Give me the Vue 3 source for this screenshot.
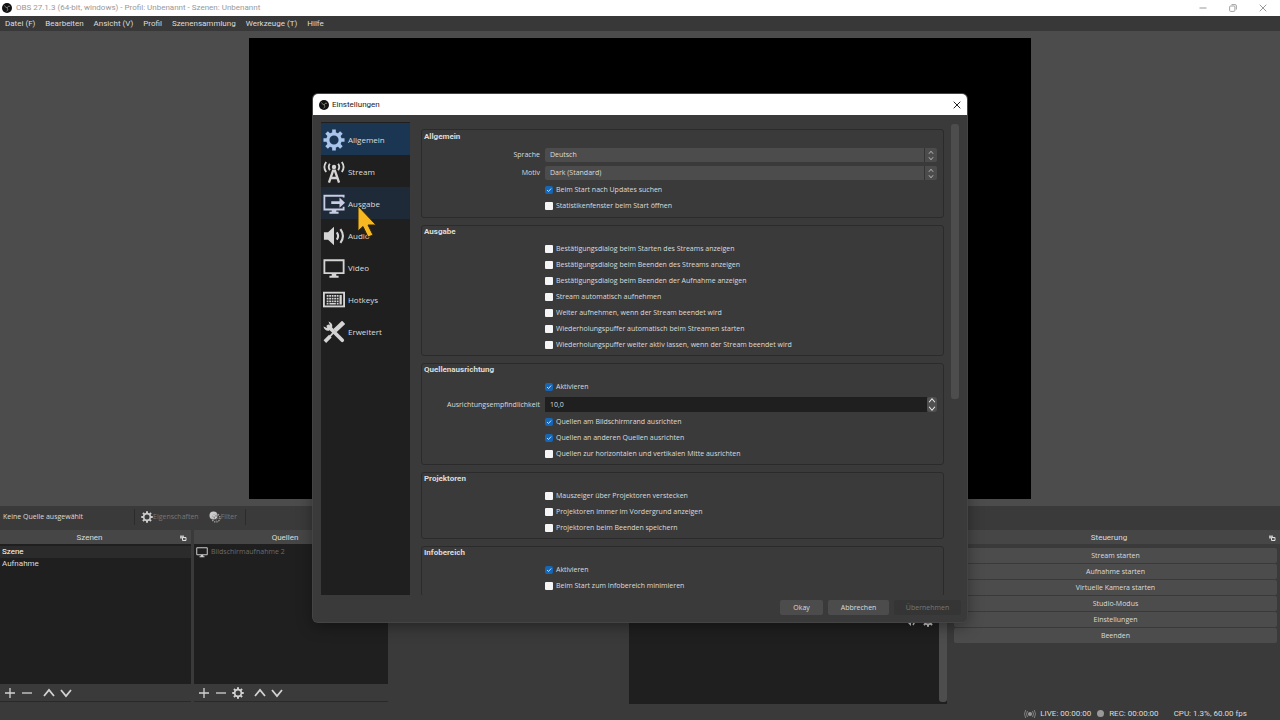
<script setup>
import { ref } from 'vue'

const menus = ['Datei (F)', 'Bearbeiten', 'Ansicht (V)', 'Profil', 'Szenensammlung', 'Werkzeuge (T)', 'Hilfe']
const pages = [
  { id: 'general', label: 'Allgemein' },
  { id: 'stream', label: 'Stream' },
  { id: 'output', label: 'Ausgabe' },
  { id: 'audio', label: 'Audio' },
  { id: 'video', label: 'Video' },
  { id: 'hotkeys', label: 'Hotkeys' },
  { id: 'advanced', label: 'Erweitert' }
]
const check = (label, on = false) => ({ type: 'check', label, on })
const groups = ref([
  {
    title: 'Allgemein',
    rows: [
      { type: 'select', id: 'language', label: 'Sprache', value: 'Deutsch' },
      { type: 'select', id: 'theme', label: 'Motiv', value: 'Dark (Standard)' },
      check('Beim Start nach Updates suchen', true),
      check('Statistikenfenster beim Start öffnen')
    ]
  },
  {
    title: 'Ausgabe',
    rows: [
      check('Bestätigungsdialog beim Starten des Streams anzeigen'),
      check('Bestätigungsdialog beim Beenden des Streams anzeigen'),
      check('Bestätigungsdialog beim Beenden der Aufnahme anzeigen'),
      check('Stream automatisch aufnehmen'),
      check('Weiter aufnehmen, wenn der Stream beendet wird'),
      check('Wiederholungspuffer automatisch beim Streamen starten'),
      check('Wiederholungspuffer weiter aktiv lassen, wenn der Stream beendet wird')
    ]
  },
  {
    title: 'Quellenausrichtung',
    rows: [
      check('Aktivieren', true),
      { type: 'spin', id: 'snap', label: 'Ausrichtungsempfindlichkeit', value: '10,0' },
      check('Quellen am Bildschirmrand ausrichten', true),
      check('Quellen an anderen Quellen ausrichten', true),
      check('Quellen zur horizontalen und vertikalen Mitte ausrichten')
    ]
  },
  {
    title: 'Projektoren',
    rows: [
      check('Mauszeiger über Projektoren verstecken'),
      check('Projektoren immer im Vordergrund anzeigen'),
      check('Projektoren beim Beenden speichern')
    ]
  },
  {
    title: 'Infobereich',
    rows: [check('Aktivieren', true), check('Beim Start zum Infobereich minimieren')]
  }
])
const controls = ['Stream starten', 'Aufnahme starten', 'Virtuelle Kamera starten', 'Studio-Modus', 'Einstellungen', 'Beenden']
</script>

<template>
  <div class="window">
    <svg class="defs" aria-hidden="true">
      <symbol id="logo" viewBox="0 0 24 24">
        <circle cx="12" cy="12" r="12" fill="#111" />
        <path d="M6 6c2 4 4 5 7 5M19 8c-4-1-6 1-7 4M11 20c3-3 4-5 1-8" fill="none" stroke="#999" stroke-width="2" />
      </symbol>
      <symbol id="gear" viewBox="0 0 24 24">
        <circle cx="12" cy="12" r="6.7" fill="none" stroke="currentColor" stroke-width="3.4" />
        <path d="M12 0.5v4M12 19.5v4M0.500 12h4M19.500 12h4M3.900 3.900l2.800 2.800M17.300 17.300l2.800 2.800M20.100 3.900l-2.800 2.800M6.700 17.300l-2.800 2.800" stroke="currentColor" stroke-width="4" />
      </symbol>
      <symbol id="monitor" viewBox="0 0 24 24">
        <path d="M1.500 3.500h21v14h-21z" fill="none" stroke="currentColor" stroke-width="2" />
        <path d="M9.500 18h5v2.500h2.500v2h-10v-2h2.500z" fill="currentColor" />
      </symbol>
      <symbol id="popout" viewBox="0 0 8 8">
        <path d="M1 1.500h4v3h-4z" fill="#bbb" />
        <path d="M3.500 3.500h3.500v3h-3.500z" fill="#555" stroke="#ddd" stroke-width="1" />
      </symbol>
      <symbol id="plus" viewBox="0 0 12 12"><path d="M6 1v10M1 6h10" stroke="currentColor" stroke-width="1.300" /></symbol>
      <symbol id="minus" viewBox="0 0 12 12"><path d="M1 6h10" stroke="currentColor" stroke-width="1.300" /></symbol>
      <symbol id="up" viewBox="0 0 12 12"><path d="M1 9l5-6 5 6" fill="none" stroke="currentColor" stroke-width="1.800" /></symbol>
      <symbol id="down" viewBox="0 0 12 12"><path d="M1 3l5 6 5-6" fill="none" stroke="currentColor" stroke-width="1.800" /></symbol>
      <symbol id="close" viewBox="0 0 8 8"><path d="M0.700 0.700l6.600 6.600M7.300 0.700l-6.600 6.600" stroke="currentColor" stroke-width="1" /></symbol>
    </svg>

    <header class="titlebar">
      <svg class="logo"><use href="#logo" /></svg>
      <span class="caption">OBS 27.1.3 (64-bit, windows) - Profil: Unbenannt - Szenen: Unbenannt</span>
      <button aria-label="Minimieren"><svg viewBox="0 0 8 8"><path d="M0.500 4h7" stroke="currentColor" /></svg></button>
      <button aria-label="Verkleinern"><svg viewBox="0 0 8 8"><rect x="0.600" y="2" width="5.300" height="5.400" rx="1" fill="none" stroke="currentColor" stroke-width="0.900" /><path d="M2.500 0.600h3.500q1.400 0 1.400 1.400v3.500" fill="none" stroke="currentColor" stroke-width="0.900" /></svg></button>
      <button aria-label="Schließen"><svg><use href="#close" /></svg></button>
    </header>
    <nav class="menubar">
      <button v-for="m in menus" :key="m">{{ m }}</button>
    </nav>

    <main class="preview"><div class="canvas"></div></main>

    <section class="context">
      <span class="source-name">Keine Quelle ausgewählt</span>
      <button class="tool" disabled><svg><use href="#gear" /></svg>Eigenschaften</button>
      <button class="tool filter" disabled>
        <svg viewBox="0 0 24 24">
          <circle cx="9" cy="9" r="8" fill="#ccc" />
          <circle cx="14" cy="14" r="8" fill="none" stroke="#aaa" stroke-width="2.500" stroke-dasharray="2.500 2" />
          <circle cx="14" cy="14" r="4" fill="none" stroke="#666" stroke-width="3" stroke-dasharray="2 2" />
        </svg>Filter
      </button>
    </section>

    <section class="docks">
      <section class="dock">
        <header class="dock-title"><h2>Szenen</h2><svg><use href="#popout" /></svg></header>
        <ul class="list">
          <li class="selected">Szene</li>
          <li>Aufnahme</li>
        </ul>
        <div class="toolbar">
          <button aria-label="Szene hinzufügen"><svg><use href="#plus" /></svg></button>
          <button aria-label="Szene entfernen"><svg><use href="#minus" /></svg></button>
          <button class="spaced" aria-label="Szene nach oben"><svg><use href="#up" /></svg></button>
          <button aria-label="Szene nach unten"><svg><use href="#down" /></svg></button>
        </div>
      </section>
      <section class="dock">
        <header class="dock-title"><h2>Quellen</h2><svg><use href="#popout" /></svg></header>
        <ul class="list sources">
          <li><svg><use href="#monitor" /></svg>Bildschirmaufnahme 2</li>
        </ul>
        <div class="toolbar">
          <button aria-label="Quelle hinzufügen"><svg><use href="#plus" /></svg></button>
          <button aria-label="Quelle entfernen"><svg><use href="#minus" /></svg></button>
          <button aria-label="Quelle einstellen"><svg><use href="#gear" /></svg></button>
          <button class="spaced" aria-label="Quelle nach oben"><svg><use href="#up" /></svg></button>
          <button aria-label="Quelle nach unten"><svg><use href="#down" /></svg></button>
        </div>
      </section>
      <section class="dock"></section>
      <section class="mixer">
        <div class="mixer-body">
          <svg viewBox="0 0 12 12"><path d="M1 4h2l3-3v10l-3-3h-2z" fill="#ccc" /><path d="M8 3q3 3 0 7" fill="none" stroke="#ccc" stroke-width="1.500" /></svg>
          <svg><use href="#gear" /></svg>
        </div>
        <div class="mixer-scroll"></div>
      </section>
      <section class="dock">
        <header class="dock-title"><h2>Steuerung</h2><svg><use href="#popout" /></svg></header>
        <div class="controls">
          <button v-for="c in controls" :key="c">{{ c }}</button>
        </div>
      </section>
    </section>

    <footer class="status">
      <svg class="live" viewBox="0 0 12 10"><circle cx="6" cy="5" r="2" fill="#999" /><path d="M3.500 2q-2 3 0 6M8.500 2q2 3 0 6M1.700 1q-2.400 4 0 8M10.300 1q2.400 4 0 8" fill="none" stroke="#888" stroke-width="0.900" /></svg>
      <span class="live-text">LIVE: 00:00:00</span>
      <span class="dot"></span>
      <span class="rec-text">REC: 00:00:00</span>
      <span>CPU: 1.3%, 60.00 fps</span>
    </footer>

    <div class="overlay">
      <section class="dialog" role="dialog" aria-labelledby="dialog-title">
        <header class="dialog-title">
          <svg class="logo"><use href="#logo" /></svg>
          <h1 id="dialog-title">Einstellungen</h1>
          <button aria-label="Schließen"><svg><use href="#close" /></svg></button>
        </header>
        <div class="dialog-main">
          <nav class="pages">
            <button v-for="p in pages" :key="p.id" :class="p.id">
              <svg v-if="p.id === 'general'"><use href="#gear" /></svg>
              <svg v-else-if="p.id === 'stream'" viewBox="0 0 24 24" fill="none" stroke="currentColor" stroke-width="2">
                <circle cx="12" cy="6.500" r="2.400" fill="currentColor" stroke="none" />
                <path d="M7.500 3q-2.500 3.500 0 7M16.500 3q2.500 3.500 0 7M3.500 1q-4 5.500 0 11M20.500 1q4 5.500 0 11" />
                <path d="M6.500 23.500l4.500-13h2l4.500 13M9 18.500h6" stroke-width="2.600" />
              </svg>
              <svg v-else-if="p.id === 'output'" viewBox="0 0 24 24">
                <path d="M22.500 5v-2h-21v15h21v-3" fill="none" stroke="currentColor" stroke-width="2" />
                <path d="M9 9h9v-4l6 5.500-6 5.500v-4h-9zM9.500 18h5v2.500h2.500v2h-10v-2h2.500z" fill="currentColor" />
              </svg>
              <svg v-else-if="p.id === 'audio'" viewBox="0 0 24 24">
                <path d="M1 8h4.500l6.500-6v20l-6.500-6h-4.500z" fill="currentColor" />
                <path d="M15 8q3 4 0 8M19 4.500q5.500 7.500 0 15" fill="none" stroke="currentColor" stroke-width="2.300" />
              </svg>
              <svg v-else-if="p.id === 'video'"><use href="#monitor" /></svg>
              <svg v-else-if="p.id === 'hotkeys'" viewBox="0 0 24 24">
                <rect x="1" y="4" width="22" height="15" fill="none" stroke="currentColor" stroke-width="2" />
                <path d="M4 7.500h13M4 10.500h13M4 13.500h13" stroke="currentColor" stroke-width="2" stroke-dasharray="2 0.750" />
                <path d="M4 16.200h2M7 16.200h7M15 16.200h2" stroke="currentColor" stroke-width="1.600" />
                <path d="M18 6.500h2.500v10.500h-2.500z" fill="currentColor" />
              </svg>
              <svg v-else viewBox="0 0 24 24">
                <path d="M6 6l15 15" stroke="currentColor" stroke-width="4" stroke-linecap="round" />
                <path d="M6 0.500q5 1.500 4 6.500l-3.500 3.500q-5 0.500-6-4.500l4 1.500 3-3z" fill="currentColor" />
                <path d="M22.500 1.500l-9.500 9" stroke="currentColor" stroke-width="5" />
                <path d="M12 12l-6 6.500" stroke="currentColor" stroke-width="2" />
                <path d="M8 16.500l-6 6" stroke="currentColor" stroke-width="4" />
              </svg>
              <span>{{ p.label }}</span>
              <svg v-if="p.id === 'output'" class="pointer" viewBox="0 0 20 34">
                <path d="M1 2v25l5-4.500 5 10.500 5-2-5-10h8z" fill="#f8b822" stroke="#33270a" stroke-width="1" />
              </svg>
            </button>
          </nav>
          <div class="scroll">
            <div class="groups">
              <fieldset v-for="(g, gi) in groups" :key="g.title" :class="{ roomy: gi === 0 }" :aria-label="g.title">
                <h3>{{ g.title }}</h3>
                <div class="fields">
                  <template v-for="r in g.rows" :key="r.label">
                    <label v-if="r.type === 'check'" class="check">
                      <input type="checkbox" v-model="r.on" />
                      <svg v-if="r.on" class="tick" viewBox="0 0 8 8"><path d="M2 4l1.500 1.500 2.700-3" fill="none" stroke="#cfe6ff" stroke-width="0.900" /></svg>
                      {{ r.label }}
                    </label>
                    <template v-else>
                      <label class="name" :for="r.id">{{ r.label }}</label>
                      <div v-if="r.type === 'select'" class="combo">
                        <select :id="r.id"><option>{{ r.value }}</option></select>
                        <span class="arrows"><svg><use href="#up" /></svg><svg><use href="#down" /></svg></span>
                      </div>
                      <div v-else class="spin">
                        <input :id="r.id" type="text" v-model="r.value" />
                        <span class="steps">
                          <button aria-label="Erhöhen"><svg><use href="#up" /></svg></button>
                          <button aria-label="Verringern"><svg><use href="#down" /></svg></button>
                        </span>
                      </div>
                    </template>
                  </template>
                </div>
              </fieldset>
            </div>
            <div class="scrollbar"><div class="thumb"></div></div>
          </div>
        </div>
        <footer class="actions">
          <button class="ok">Okay</button>
          <button class="cancel">Abbrechen</button>
          <button class="apply" disabled>Übernehmen</button>
        </footer>
      </section>
    </div>
  </div>
</template>

<style>
body { margin: 0; background: #3a3a3a; }
</style>

<style scoped>
* { box-sizing: border-box; }
.window {
  position: relative;
  display: flex;
  flex-direction: column;
  height: 100vh;
  overflow: hidden;
  background: #3a3a3a;
  color: #dcdcdc;
  font: 7px/12px "Open Sans", "Noto Sans", sans-serif;
}
.defs { position: absolute; width: 0; height: 0; }
button { padding: 0; border: 0; background: none; color: inherit; font: inherit; white-space: nowrap; }
h1, h2, h3, ul, fieldset { margin: 0; padding: 0; border: 0; font: inherit; list-style: none; }
svg { display: block; flex: none; }
.titlebar, .menubar, .dock-title, .list, .status, .dialog-title, h3 { font-family: Roboto, "Open Sans", sans-serif; font-size: 8px; }

.titlebar { display: flex; align-items: center; height: 16px; padding: 0 13px 0 2px; background: #fff; color: #999; }
.logo { width: 10px; height: 10px; }
.caption { flex: 1; margin-left: 4px; }
.titlebar button { margin-left: 22px; }
.titlebar button svg { width: 8px; height: 8px; }
.menubar { display: flex; gap: 10px; height: 15px; padding: 0 5px; background: #383838; }

.preview { display: flex; flex: 1; justify-content: center; padding: 7px 0; background: #4c4c4c; }
.canvas { width: 61.1%; background: #000; }

.context { display: flex; align-items: center; height: 24px; padding: 0 3px 2px; }
.source-name { width: 131px; }
.tool { display: flex; align-items: center; height: 16px; padding: 0 4px 0 6px; color: #777; border-left: 1px solid #2c2c2c; }
.tool svg { width: 12px; height: 12px; color: #ccc; }
.filter { border-left: 0; border-right: 1px solid #2c2c2c; padding-right: 8px; }

.docks { display: grid; grid-template-columns: 191fr 194fr 235fr 318fr 330fr; gap: 3px; height: 174px; }
.dock { display: flex; flex-direction: column; min-width: 0; }
.dock-title { display: flex; align-items: center; height: 14px; padding: 1px 4px 0 0; background: #464646; }
.dock-title h2 { flex: 1; text-align: center; }
.dock-title svg { width: 8px; height: 8px; }
.list { flex: 1; padding-top: 2px; background: #1f1f1f; }
.list li { padding: 0 2px; line-height: 12px; }
.list .selected { background: #2b2b2b; color: #fff; }
.sources li { display: flex; align-items: center; gap: 3px; color: #6c6c6c; font-family: "Open Sans", "Noto Sans", sans-serif; font-size: 7px; }
.sources svg { width: 12px; height: 12px; color: #ccc; }
.toolbar { display: flex; align-items: center; gap: 5px; height: 18px; margin-bottom: 2px; padding: 1px 4px 0; border-bottom: 1px solid #292929; color: #d2d2d2; }
.toolbar svg { width: 12px; height: 12px; }
.spaced { margin-left: 5px; }

.mixer { display: flex; background: #1f1f1f; }
.mixer-body { display: flex; flex: 1; justify-content: flex-end; gap: 5px; padding: 85px 5px 0; }
.mixer-body svg { width: 12px; height: 12px; color: #ccc; }
.mixer-scroll { width: 8px; margin-bottom: 2px; border-radius: 3px; background: #4d4d4d; }
.controls { display: flex; flex-direction: column; gap: 1px; padding: 4px 3px 0 4px; }
.controls button { height: 15px; border-radius: 2px; background: #4c4c4c; line-height: 15px; }

.status { display: flex; align-items: center; justify-content: flex-end; height: 16px; padding: 3px 33px 0 0; }
.live { width: 12px; height: 10px; margin-right: 4px; }
.live-text { margin-right: 6px; }
.dot { width: 7px; height: 7px; margin-right: 5px; border-radius: 50%; background: #999; }
.rec-text { margin-right: 15px; }

.overlay { position: absolute; inset: 0; display: flex; justify-content: center; padding: 94px 0 98px; }
.dialog { display: flex; flex-direction: column; width: 51.1%; border-radius: 5px; background: #3a3a3a; box-shadow: 0 0 0 1px #444, 0 4px 16px rgba(0, 0, 0, 0.4); overflow: hidden; }
.dialog-title { display: flex; align-items: center; height: 21px; padding: 0 6px; background: #fff; color: #222; }
.dialog-title h1 { flex: 1; margin-left: 3px; }
.dialog-title button svg { width: 8px; height: 8px; }
.dialog-main { display: flex; flex: 1; gap: 9px; min-height: 0; padding: 7px 7px 0 8px; }
.pages { display: flex; flex-direction: column; width: 89px; padding-top: 1px; background: #1f1f1f; font-size: 8px; }
.pages button { position: relative; display: flex; align-items: center; gap: 3px; height: 32px; padding: 1px 0 0 2px; text-align: left; }
.pages svg { width: 22px; height: 22px; color: #d4d4d4; }
.pages .general { background: #1b3653; }
.pages .general svg { color: #a9c6ea; }
.pages .output { z-index: 1; background: #1e2a38; }
.pages .output svg { color: #c8cce4; }
.pages .pointer { position: absolute; left: 36px; top: 17px; width: 20px; height: 34px; }

.scroll { display: flex; flex: 1; min-width: 0; overflow: hidden; }
.groups { display: flex; flex: 1; flex-direction: column; gap: 7px; min-width: 0; padding: 7px 0 0 2px; }
fieldset { flex: none; min-width: 0; border: 1px solid #2b2b2b; border-radius: 3px; padding: 0 6px 2px 2px; }
h3 { height: 15px; line-height: 12px; font-weight: 700; }
.fields { display: grid; grid-template-columns: 116px 1fr; column-gap: 5px; }
.roomy { padding: 1px 6px 3px 2px; }
.check { position: relative; grid-column: 2; display: flex; align-items: center; gap: 3px; height: 16px; }
.check input { appearance: none; width: 8px; height: 8px; margin: 0; border-radius: 1px; background: #f5f5f5; }
.check input:checked { border-radius: 2px; background: #1766b5; }
.tick { position: absolute; left: 0; top: 4px; width: 8px; height: 8px; }
.name { align-self: center; text-align: right; }
.combo { display: flex; height: 14px; margin: 2px 0; border-radius: 2px; background: #4c4c4c; }
.combo select { appearance: none; flex: 1; border: 0; padding: 0 5px; background: none; color: inherit; font: inherit; }
.arrows { display: flex; flex-direction: column; align-items: center; justify-content: center; gap: 1px; width: 13px; border-left: 1px solid #333; color: #ddd; }
.arrows svg { width: 6px; height: 5px; }
.spin { display: flex; height: 15px; margin: 2px 0; }
.spin input { flex: 1; min-width: 0; border: 0; padding: 0 5px; background: #1f1f1f; color: inherit; font: inherit; }
.steps { display: flex; flex-direction: column; justify-content: center; gap: 1px; width: 10px; border-radius: 3px; background: #505050; }
.steps svg { width: 8px; height: 7px; margin: 0 auto; }
.steps button { height: 7px; color: #eee; }
.scrollbar { width: 16px; padding: 2px 1px 0 7px; }
.thumb { height: 275px; border-radius: 3px; background: #4d4d4d; }

.actions { display: flex; justify-content: flex-end; gap: 5px; height: 27px; padding: 5px 6px 7px; }
.actions button { border-radius: 2px; background: #4c4c4c; }
.ok { width: 43px; }
.cancel { width: 61px; }
.actions .apply { width: 67px; background: #353535; color: #777; }
</style>
